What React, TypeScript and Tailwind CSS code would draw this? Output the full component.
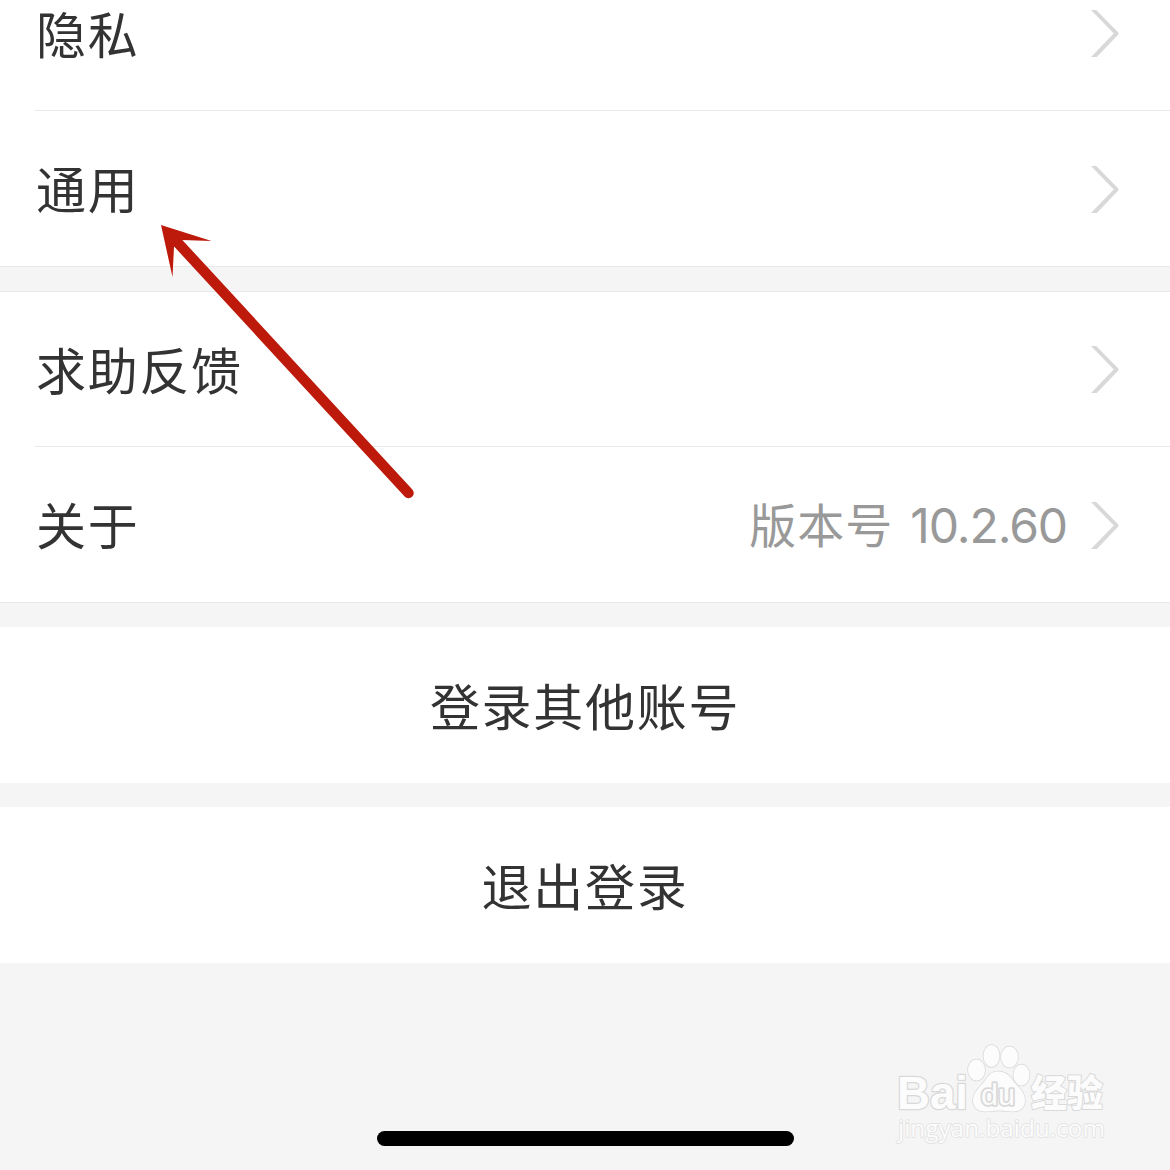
interface SettingRowProps {
  label: string;
  detail?: string;
  last?: boolean;
}

function ChevronIcon() {
  return (
    <svg className="mt-px w-7 h-[47px] shrink-0" viewBox="0 0 28 47" fill="none">
      <path d="M0 0h5.2L27.500 22.8v1.400L5.800 47H0L22.800 23.500z" fill="#d8d8d8" />
    </svg>
  );
}

function SettingRow({ label, detail, last }: SettingRowProps) {
  return (
    <div className="pl-[35px] h-[155px]">
      <div
        className={
          last
            ? 'flex items-center h-full pr-[51px]'
            : 'flex items-center h-full pr-[51px] border-b border-[#e8e8e8]'
        }
      >
        <span className="flex-1 mb-[3px] ml-px text-[50px] leading-[72px] tracking-[1.7px] text-[#333333]">{label}</span>
        {detail && (
          <span className="mr-[24px] text-[47px] leading-[72px] tracking-[1px] text-[#999999]">
            {detail.split(' ')[0]}
            <span className="ml-[17px] font-['Inter'] text-[48px] tracking-[-1.1px]">{detail.split(' ')[1]}</span>
          </span>
        )}
        <ChevronIcon />
      </div>
    </div>
  );
}

function ActionRow({ label }: { label: string }) {
  return (
    <button className="flex items-center justify-center w-full h-[156px] pb-0.5 bg-white text-[50px] leading-[72px] tracking-[1.7px] text-[#333333]">
      {label}
    </button>
  );
}

function PointerArrow() {
  return (
    <svg className="absolute left-[150px] top-[215px] w-[280px] h-[300px]" viewBox="150 215 280 300">
      <path d="M178 243 L408.500 493" stroke="#bd1a0c" strokeWidth="10.5" strokeLinecap="round" />
      <path d="M161 225 L211.500 241 L181 240 L174 247 L172.500 277 Z" fill="#bd1a0c" />
    </svg>
  );
}

function Watermark() {
  return (
    <svg
      className="absolute left-[890px] top-[1040px] w-[225px] h-[108px]"
      viewBox="890 1040 225 108"
      fill="#fcfcfc"
      stroke="#d9d9d9"
      strokeWidth="1.5"
      strokeLinejoin="round"
      paintOrder="stroke"
    >
      <text x="897" y="1109" fontSize="46" fontFamily="Liberation Sans" fontWeight="700" textLength="71" lengthAdjust="spacingAndGlyphs" strokeWidth="2.5">Bai</text>
      <ellipse cx="976.500" cy="1070" rx="8.500" ry="10.500" />
      <ellipse cx="991.500" cy="1056" rx="8" ry="11" />
      <ellipse cx="1009.500" cy="1057" rx="8.500" ry="10.500" />
      <ellipse cx="1021.500" cy="1075" rx="8" ry="10.500" />
      <path d="M998 1071.500c-7 0-10 4-13 9-4 6-12 11-12 20 0 7 5 11 12 11 5 0 8-1 14-1s9 1 14 1c7 0 12-4 12-11 0-9-8-14-12-20-3-5-8-9-15-9z" />
      <text x="981" y="1104.500" fontSize="29" fontFamily="Liberation Sans" textLength="34" lengthAdjust="spacingAndGlyphs" strokeWidth="3.500">du</text>
      <text x="1031" y="1107" fontSize="37" fontFamily="Noto Sans CJK SC" fontWeight="900" textLength="72" lengthAdjust="spacingAndGlyphs" strokeWidth="2">经验</text>
      <text x="898" y="1137" fontSize="24" fontFamily="Open Sans" fontWeight="500" textLength="207" lengthAdjust="spacingAndGlyphs" strokeWidth="1.500" stroke="#e0e0e0">jingyan.baidu.com</text>
    </svg>
  );
}

export default function App() {
  return (
    <main className="relative w-[1170px] h-[1170px] overflow-hidden bg-[#f5f5f5] font-['Noto_Sans_CJK_SC',sans-serif]">
      <div className="flex flex-col -mt-[44px]">
        <section className="bg-white border-b border-[#e8e8e8]">
          <SettingRow label="隐私" />
          <SettingRow label="通用" last />
        </section>
        <section className="mt-6 bg-white border-y border-[#e8e8e8]">
          <SettingRow label="求助反馈" />
          <SettingRow label="关于" detail="版本号 10.2.60" last />
        </section>
        <div className="flex flex-col gap-6 mt-6">
          <ActionRow label="登录其他账号" />
          <ActionRow label="退出登录" />
        </div>
      </div>
      <div className="absolute left-[377px] bottom-6 w-[417px] h-[15px] rounded-full bg-black" />
      <PointerArrow />
      <Watermark />
    </main>
  );
}
